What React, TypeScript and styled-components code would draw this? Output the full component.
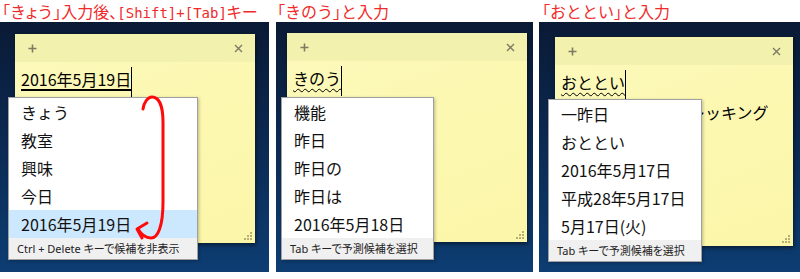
import React from "react";
import styled, { createGlobalStyle } from "styled-components";

const GlobalStyle = createGlobalStyle`
  html, body { margin: 0; padding: 0; background: #ffffff; }
  body { font-family: "Noto Sans CJK JP", "Noto Sans", sans-serif; }
`;

const Page = styled.div`
  display: flex;
  width: 800px;
  height: 279px;
  overflow: hidden;
  background: #ffffff;
`;

const Column = styled.div<{ $w: number; $gap: number }>`
  width: ${(p) => p.$w}px;
  margin-left: ${(p) => p.$gap}px;
  flex-shrink: 0;
  display: flex;
  flex-direction: column;
`;

const Caption = styled.div<{ $indent: number }>`
  height: 22px;
  padding-left: ${(p) => p.$indent}px;
  color: #f02a2a;
  font-size: 16px;
  line-height: 22px;
  white-space: nowrap;
`;

const Half = styled.span`
  font-feature-settings: "palt";
`;

const Mono = styled.span`
  font-family: "DejaVu Sans Mono", "Liberation Mono", monospace;
  font-size: 14px;
`;

const Desktop = styled.div<{ $top: number; $left: number }>`
  position: relative;
  height: 250px;
  box-sizing: border-box;
  padding: ${(p) => p.$top}px 0 0 ${(p) => p.$left}px;
  background: linear-gradient(180deg, #0a1a35 0%, #0b2850 45%, #0c3666 80%, #0d3d72 100%);
`;

const Note = styled.div<{ $w: number }>`
  position: relative;
  width: ${(p) => p.$w}px;
  height: 209px;
  background: linear-gradient(160deg, #fcf9bd 0%, #fcf8b2 40%, #fbf6a8 100%);
  box-shadow: 1px 2px 4px rgba(0, 0, 0, 0.5);
  display: flex;
  flex-direction: column;
`;

const NoteBar = styled.div`
  height: 28px;
  flex-shrink: 0;
  background: #f3f1ae;
  display: flex;
  align-items: center;
  justify-content: space-between;
  padding: 0 12px 0 13px;
`;

const BarIcon = styled.svg`
  display: block;
`;

const NoteBody = styled.div`
  flex: 1;
  padding: 2px 6px;
  font-size: 16px;
  line-height: 30px;
  color: #000;
  white-space: nowrap;
  overflow: hidden;
`;

const Line = styled.div`
  height: 30px;
`;

const Typed = styled.span<{ $wavy?: boolean }>`
  text-decoration-line: underline;
  text-decoration-style: ${(p) => (p.$wavy ? "wavy" : "solid")};
  text-decoration-thickness: ${(p) => (p.$wavy ? "1px" : "2px")};
  text-underline-offset: 3px;
  text-decoration-color: #000;
`;

const Caret = styled.span`
  display: inline-block;
  width: 1px;
  height: 30px;
  background: #000;
  vertical-align: top;
  position: relative;
  top: 3px;
`;

const Grip = styled.svg`
  position: absolute;
  right: 3px;
  bottom: 3px;
`;

const Popup = styled.div<{ $left: number; $top: number; $w: number }>`
  position: absolute;
  left: ${(p) => p.$left}px;
  top: ${(p) => p.$top}px;
  width: ${(p) => p.$w}px;
  box-sizing: border-box;
  background: #ffffff;
  border: 1px solid #a0a0a0;
  box-shadow: 1px 1px 3px rgba(0, 0, 0, 0.25);
  z-index: 2;
`;

const Item = styled.div<{ $selected?: boolean }>`
  height: 28px;
  line-height: 28px;
  padding-left: 12px;
  font-size: 16px;
  color: #111;
  white-space: nowrap;
  background: ${(p) => (p.$selected ? "#cce8ff" : "#ffffff")};
`;

const Footer = styled.div`
  height: 21px;
  line-height: 21px;
  padding-left: 8px;
  background: #f0f0f0;
  font-family: "Noto Sans", "Noto Sans CJK JP", sans-serif;
  font-size: 11px;
  color: #222;
  white-space: nowrap;
  font-feature-settings: "palt";
`;

const Arrow = styled.svg`
  position: absolute;
  left: 0;
  top: 0;
  z-index: 3;
  pointer-events: none;
`;

const Plus = () => (
  <BarIcon width="9" height="9" viewBox="0 0 9 9">
    <path d="M4.5 0.5V8.5M0.5 4.5H8.5" stroke="#7d7b63" strokeWidth="1.6" />
  </BarIcon>
);

const Close = () => (
  <BarIcon width="9" height="9" viewBox="0 0 9 9">
    <path d="M1 1L8 8M8 1L1 8" stroke="#7d7b63" strokeWidth="1.4" />
  </BarIcon>
);

const GripDots = () => (
  <Grip width="8" height="8" viewBox="0 0 8 8">
    {[
      [6, 0],
      [3, 3],
      [6, 3],
      [0, 6],
      [3, 6],
      [6, 6],
    ].map(([x, y]) => (
      <rect key={`${x}-${y}`} x={x} y={y} width="2" height="2" fill="#b5b07a" />
    ))}
  </Grip>
);

type Panel = {
  w: number;
  gap: number;
  indent: number;
  caption: React.ReactNode;
  noteTop: number;
  noteLeft: number;
  noteW: number;
  typed: string;
  wavy: boolean;
  extraLine?: string;
  popup: { left: number; top: number; w: number };
  items: string[];
  selected?: number;
  footer: string;
  arrow?: boolean;
};

const panels: Panel[] = [
  {
    w: 269,
    gap: 0,
    indent: 2,
    caption: (
      <>
        <Half>「</Half>き<Half>ょ</Half>う<Half>」</Half>入力後<Half>、</Half>
        <Mono>[Shift]+[Tab]</Mono>
        <Half>キー</Half>
      </>
    ),
    noteTop: 12,
    noteLeft: 15,
    noteW: 240,
    typed: "2016年5月19日",
    wavy: false,
    popup: { left: 8, top: 75, w: 190 },
    items: ["きょう", "教室", "興味", "今日", "2016年5月19日"],
    selected: 4,
    footer: "Ctrl + Delete キーで候補を非表示",
    arrow: true,
  },
  {
    w: 257,
    gap: 7,
    indent: 1,
    caption: (
      <>
        <Half>「</Half>きのう<Half>」</Half>と入力
      </>
    ),
    noteTop: 11,
    noteLeft: 11,
    noteW: 240,
    typed: "きのう",
    wavy: true,
    popup: { left: 5, top: 75, w: 153 },
    items: ["機能", "昨日", "昨日の", "昨日は", "2016年5月18日"],
    footer: "Tab キーで予測候補を選択",
  },
  {
    w: 261,
    gap: 6,
    indent: 3,
    caption: (
      <>
        <Half>「</Half>おととい<Half>」</Half>と入力
      </>
    ),
    noteTop: 15,
    noteLeft: 16,
    noteW: 238,
    typed: "おととい",
    wavy: true,
    extraLine: "週末は高尾山でトレッキング",
    popup: { left: 9, top: 77, w: 154 },
    items: ["一昨日", "おととい", "2016年5月17日", "平成28年5月17日", "5月17日(火)"],
    footer: "Tab キーで予測候補を選択",
  },
];

export default function App() {
  return (
    <>
      <GlobalStyle />
      <Page>
        {panels.map((p, i) => (
          <Column key={i} $w={p.w} $gap={p.gap}>
            <Caption $indent={p.indent}>{p.caption}</Caption>
            <Desktop $top={p.noteTop} $left={p.noteLeft}>
              <Note $w={p.noteW}>
                <NoteBar>
                  <Plus />
                  <Close />
                </NoteBar>
                <NoteBody>
                  <Line>
                    <Typed $wavy={p.wavy}>{p.typed}</Typed>
                    <Caret />
                  </Line>
                  {p.extraLine && <Line>{p.extraLine}</Line>}
                </NoteBody>
                <GripDots />
              </Note>
              <Popup $left={p.popup.left} $top={p.popup.top} $w={p.popup.w}>
                {p.items.map((it, k) => (
                  <Item key={k} $selected={p.selected === k}>
                    {it}
                  </Item>
                ))}
                <Footer>{p.footer}</Footer>
              </Popup>
              {p.arrow && (
                <Arrow width={p.w} height={250} viewBox={`0 0 ${p.w} 250`}>
                  <path
                    d="M143 87 C144 80 148 75 152 75 C158 75 163 82 163 100 L163 180 C163 204 158 216 151 216 C145 216 141 212 138 207"
                    fill="none"
                    stroke="#ff0a0a"
                    strokeWidth="3"
                    strokeLinecap="round"
                  />
                  <path
                    d="M147 201 L137 207 L142 216"
                    fill="none"
                    stroke="#ff0a0a"
                    strokeWidth="3"
                    strokeLinecap="round"
                    strokeLinejoin="round"
                  />
                </Arrow>
              )}
            </Desktop>
          </Column>
        ))}
      </Page>
    </>
  );
}
